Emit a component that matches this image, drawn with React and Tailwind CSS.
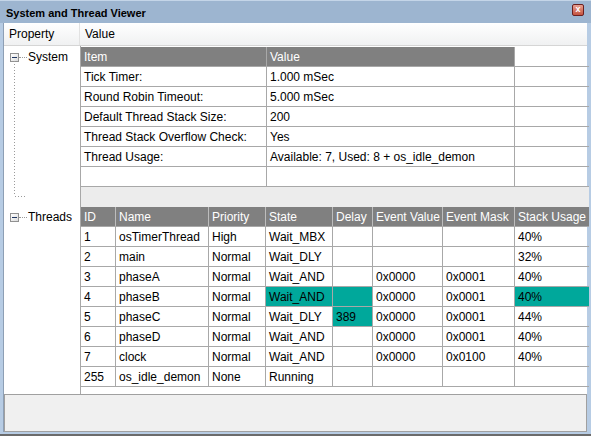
import React from "react";
import clsx from "clsx";

const systemRows = [
  ["Tick Timer:", "1.000 mSec"],
  ["Round Robin Timeout:", "5.000 mSec"],
  ["Default Thread Stack Size:", "200"],
  ["Thread Stack Overflow Check:", "Yes"],
  ["Thread Usage:", "Available: 7, Used: 8 + os_idle_demon"],
  ["", ""],
];

const threadCols = [
  { label: "ID", w: "w-[35px]" },
  { label: "Name", w: "w-[93px]" },
  { label: "Priority", w: "w-[57px]" },
  { label: "State", w: "w-[67px]" },
  { label: "Delay", w: "w-[40px]" },
  { label: "Event Value", w: "w-[70px]" },
  { label: "Event Mask", w: "w-[72px]" },
  { label: "Stack Usage", w: "flex-1", last: true },
];

// hl = indexes of highlighted cells
const threads = [
  { cells: ["1", "osTimerThread", "High", "Wait_MBX", "", "", "", "40%"], hl: [] },
  { cells: ["2", "main", "Normal", "Wait_DLY", "", "", "", "32%"], hl: [] },
  { cells: ["3", "phaseA", "Normal", "Wait_AND", "", "0x0000", "0x0001", "40%"], hl: [] },
  { cells: ["4", "phaseB", "Normal", "Wait_AND", "", "0x0000", "0x0001", "40%"], hl: [3, 4, 7] },
  { cells: ["5", "phaseC", "Normal", "Wait_DLY", "389", "0x0000", "0x0001", "44%"], hl: [4] },
  { cells: ["6", "phaseD", "Normal", "Wait_AND", "", "0x0000", "0x0001", "40%"], hl: [] },
  { cells: ["7", "clock", "Normal", "Wait_AND", "", "0x0000", "0x0100", "40%"], hl: [] },
  { cells: ["255", "os_idle_demon", "None", "Running", "", "", "", ""], hl: [] },
];

const MinusBox = () => (
  <div className="w-[9px] h-[9px] border border-[#919191] bg-gradient-to-br from-white to-[#dcdcdc] flex items-center justify-center shrink-0">
    <div className="w-[5px] h-px bg-[#1f3560]" />
  </div>
);

const TreeNode = ({ label }) => (
  <div className="h-[20px] flex items-center pl-[6px]">
    <MinusBox />
    <div className="w-[8px] border-t border-dotted border-[#9a9a9a]" />
    <span className="ml-px">{label}</span>
  </div>
);

const App = () => {
  return (
    <div className="w-[591px] h-[436px] flex flex-col bg-[#b7cce4] border-b-2 border-[#6b6b6b] font-['Liberation_Sans',Arial,sans-serif] text-[12px] text-black">
      {/* title bar */}
      <div className="h-[23px] shrink-0 flex justify-between items-start pl-[6px] pr-[7px] bg-[#9db5d0] border-t border-[#c4d5e8]">
        <span className="pt-[6px] leading-[13px] text-[11px] font-bold">System and Thread Viewer</span>
        <div className="mt-[3px] w-[12px] h-[12px] rounded-[2px] border border-[#6b1f1f] bg-gradient-to-b from-[#e7a091] to-[#c4523f] flex items-center justify-center">
          <span className="text-white text-[9px] font-bold leading-none -mt-px">x</span>
        </div>
      </div>

      <div className="flex-1 flex flex-col pl-[3px] pr-[4px] pb-[2px]">
        <div className="flex-1 flex flex-col bg-white border-l border-[#8d9fb5]">
          {/* column header */}
          <div className="h-[23px] shrink-0 flex border-b border-[#d5d5d5] bg-gradient-to-b from-white to-[#f0f1f2]">
            <div className="w-[76px] border-r border-[#e2e2e2] pl-[5px] flex items-center">Property</div>
            <div className="flex-1 pl-[5px] flex items-center">Value</div>
          </div>

          {/* body */}
          <div className="flex-1 flex">
            <div className="w-[76px] shrink-0 relative pt-px">
              <TreeNode label="System" />
              <div className="h-[140px]" />
              <TreeNode label="Threads" />
              <svg className="absolute left-0 top-0" width="76" height="160">
                <line x1="10.5" y1="15" x2="10.5" y2="150" stroke="#9a9a9a" strokeDasharray="1 2" />
                <line x1="11" y1="150.5" x2="23" y2="150.5" stroke="#9a9a9a" strokeDasharray="1 2" />
              </svg>
            </div>

            <div className="flex-1 flex flex-col border-l border-[#a8a8a8] pt-px">
              {/* system table */}
              <div className="h-[20px] flex border-b border-[#a8a8a8]">
                <div className="w-[186px] bg-[#808080] text-white border-r border-[#a8a8a8] px-[3px] flex items-center">Item</div>
                <div className="w-[248px] bg-[#808080] text-white border-r border-[#a8a8a8] px-[3px] flex items-center">Value</div>
                <div className="flex-1" />
              </div>
              {systemRows.map(([k, v], i) => (
                <div key={i} className="h-[20px] flex border-b border-[#a8a8a8]">
                  <div className="w-[186px] border-r border-[#a8a8a8] px-[3px] flex items-center whitespace-nowrap">{k}</div>
                  <div className="w-[248px] border-r border-[#a8a8a8] px-[3px] flex items-center whitespace-nowrap">{v}</div>
                  <div className="flex-1" />
                </div>
              ))}

              <div className="h-[20px] bg-[#ececec]" />

              {/* threads table */}
              <div className="h-[20px] flex border-b border-[#a8a8a8] bg-[#808080] text-white">
                {threadCols.map((c) => (
                  <div
                    key={c.label}
                    className={clsx(
                      "px-[3px] flex items-center whitespace-nowrap overflow-hidden",
                      c.w,
                      !c.last && "border-r border-[#bdbdbd]"
                    )}
                  >
                    {c.label}
                  </div>
                ))}
              </div>
              {threads.map((t, r) => (
                <div key={r} className="h-[20px] flex border-b border-[#a8a8a8]">
                  {t.cells.map((v, i) => (
                    <div
                      key={i}
                      className={clsx(
                        "px-[3px] flex items-center whitespace-nowrap overflow-hidden",
                        threadCols[i].w,
                        !threadCols[i].last && "border-r border-[#a8a8a8]",
                        t.hl.includes(i) && "bg-[#00a89b]"
                      )}
                    >
                      {v}
                    </div>
                  ))}
                </div>
              ))}
              <div className="flex-1" />
            </div>
          </div>

          {/* bottom panel */}
          <div className="h-[38px] shrink-0 bg-[#f0f0f0] border border-[#a0a0a0]" />
        </div>
      </div>
    </div>
  );
};

export default App;
